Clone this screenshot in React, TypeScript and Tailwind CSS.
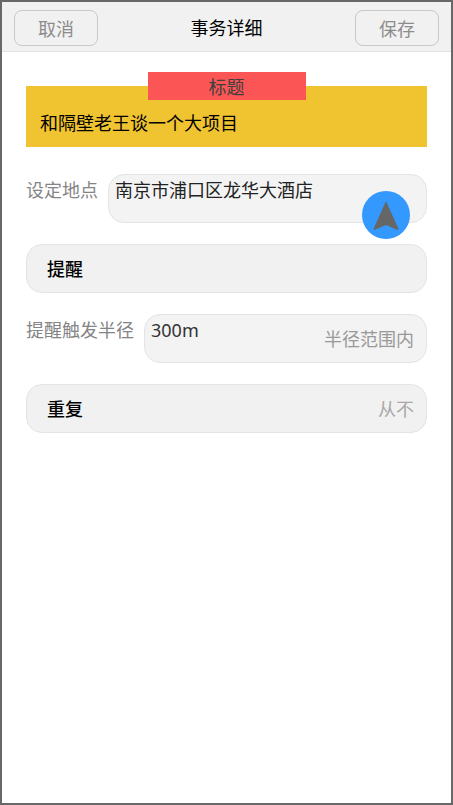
import { useState } from "react";

const box = "h-[49px] min-w-0 rounded-2xl border border-[#e4e4e4]";
const headerButton =
  "h-9 w-[84px] rounded-lg border border-[#c8c8c8] bg-[#f1f1f1] pt-0.5 text-[#8c8c8c]";

function Header() {
  return (
    <header className="flex h-[50px] items-center justify-between border-b border-[#e2e2e2] bg-[#f1f1f1] px-3 pt-0.5">
      <button type="button" className={headerButton}>
        取消
      </button>
      <h1 className="text-black">事务详细</h1>
      <button type="button" className={headerButton}>
        保存
      </button>
    </header>
  );
}

function LocateButton() {
  return (
    <button
      type="button"
      aria-label="定位"
      className="absolute top-4 right-4 size-12 rounded-full bg-[#3399ff]"
    >
      <svg viewBox="0 0 48 48" className="size-12" aria-hidden="true">
        <path
          d="M24 10 L36.3 37.6 Q36.6 39.2 35 38.8 L24 34 L13 38.8 Q11.4 39.2 11.7 37.6 Z"
          fill="#666666"
        />
      </svg>
    </button>
  );
}

export default function App() {
  const [title, setTitle] = useState("和隔壁老王谈一个大项目");
  const [place, setPlace] = useState("南京市浦口区龙华大酒店");
  const [radius, setRadius] = useState("300m");

  return (
    <div className="min-h-screen border-2 border-[#686868] bg-white font-['Noto_Sans','Noto_Sans_CJK_SC',sans-serif] text-[18px] leading-6">
      <Header />
      <main className="flex flex-col gap-[21px] px-6 pt-5">
        <section className="mb-1.5 flex flex-col">
          <label
            htmlFor="title"
            className="z-10 -mb-3.5 flex h-7 w-[158px] items-center justify-center self-center bg-[#fb5555] pt-0.5 text-[#404040]"
          >
            标题
          </label>
          <div className="bg-[#f0c330] px-3.5 pt-[25px] pb-3">
            <input
              id="title"
              value={title}
              onChange={(e) => setTitle(e.target.value)}
              className="block h-6 w-full text-black outline-none"
            />
          </div>
        </section>

        <div className="flex gap-2.5">
          <label htmlFor="place" className="shrink-0 pt-1 text-[#858585]">
            设定地点
          </label>
          <div className={`${box} relative flex-1 bg-[#f3f3f3] px-1.5`}>
            <input
              id="place"
              value={place}
              onChange={(e) => setPlace(e.target.value)}
              className="mt-[3px] block h-6 w-full text-[#222] outline-none"
            />
            <LocateButton />
          </div>
        </div>

        <button
          type="button"
          className={`${box} flex items-center bg-[#f1f1f1] px-5 font-medium text-black`}
        >
          提醒
        </button>

        <div className="flex gap-2.5">
          <label htmlFor="radius" className="shrink-0 pt-1 text-[#858585]">
            提醒触发半径
          </label>
          <div className={`${box} flex flex-1 items-center bg-[#f3f3f3] pr-3 pl-1.5`}>
            <input
              id="radius"
              value={radius}
              onChange={(e) => setRadius(e.target.value)}
              className="mt-[3px] h-6 min-w-0 flex-1 self-start text-[#333] outline-none"
            />
            <span className="text-[#999]">半径范围内</span>
          </div>
        </div>

        <button
          type="button"
          className={`${box} flex items-center justify-between bg-[#f1f1f1] pr-3 pl-5`}
        >
          <span className="font-medium text-black">重复</span>
          <span className="text-[#a8a8a8]">从不</span>
        </button>
      </main>
    </div>
  );
}
